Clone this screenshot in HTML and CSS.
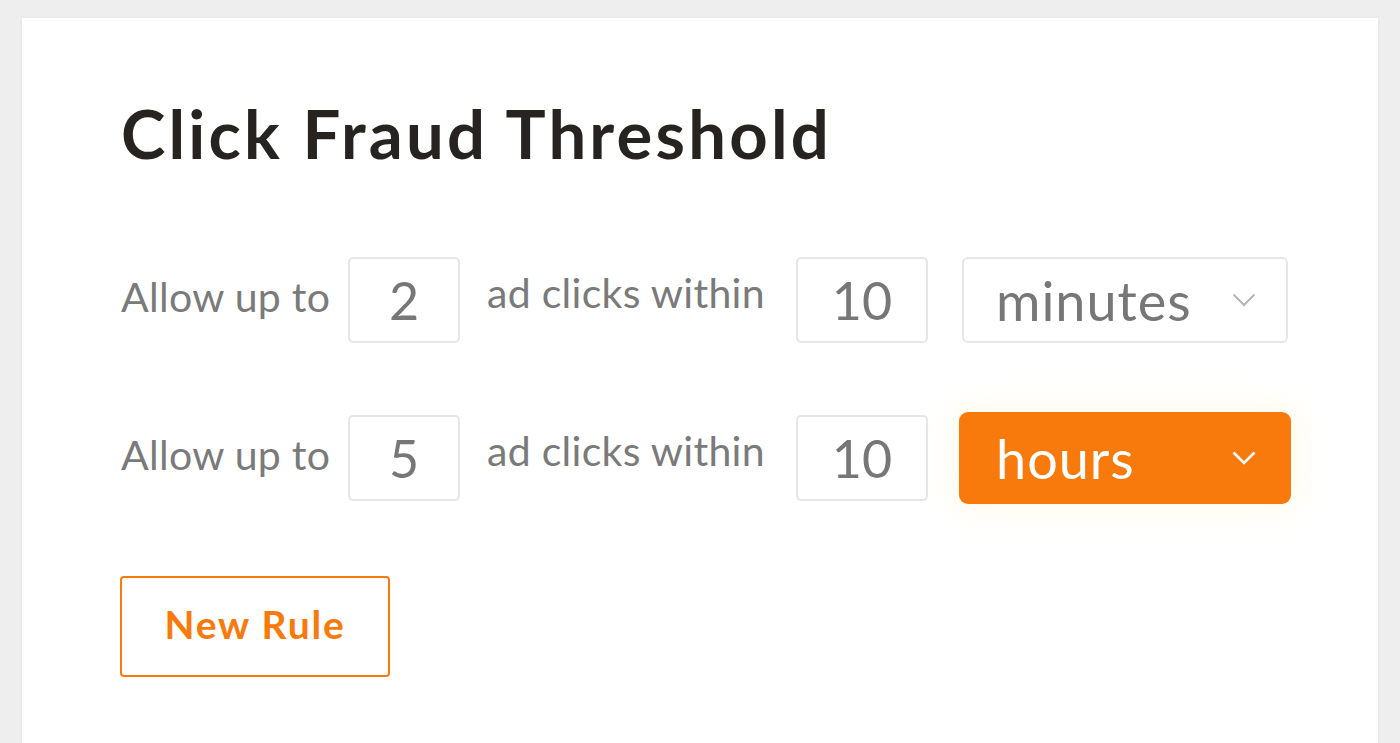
FILE: index.html
```html
<!DOCTYPE html>
<html>
<head>
<meta charset="utf-8">
<link rel="stylesheet" href="styles.css">
</head>
<body>
<div class="card">
  <h1 class="title">Click Fraud Threshold</h1>
  <div class="rule">
    <span class="label label-allow">Allow up to</span>
    <div class="num num-small">2</div>
    <span class="label label-within">ad clicks within</span>
    <div class="num num-wide">10</div>
    <div class="select">
      <span class="select-text">minutes</span>
      <svg class="chev" width="24" height="14" viewBox="0 0 24 14"><path d="M1.5 1.5 L12 12 L22.5 1.5" fill="none" stroke="#b5b5b5" stroke-width="2"/></svg>
    </div>
  </div>
  <div class="rule">
    <span class="label label-allow">Allow up to</span>
    <div class="num num-small">5</div>
    <span class="label label-within">ad clicks within</span>
    <div class="num num-wide">10</div>
    <div class="select select-active">
      <span class="select-text">hours</span>
      <svg class="chev" width="24" height="14" viewBox="0 0 24 14"><path d="M1.5 1.5 L12 12 L22.5 1.5" fill="none" stroke="#ffffff" stroke-width="2.6"/></svg>
    </div>
  </div>
  <button class="new-rule">New Rule</button>
</div>
</body>
</html>
```

FILE: styles.css
```css
html, body {
  margin: 0;
  padding: 0;
  height: 100%;
  background: #eeeeee;
  overflow: hidden;
}
body {
  font-family: "Lato", "Open Sans", sans-serif;
}
.card {
  margin: 18px 22px 0 22px;
  background: #ffffff;
  height: 800px;
  padding: 1px 40px 0 99px;
  box-shadow: 0 0 4px rgba(0,0,0,0.04);
}
.title {
  margin: 74px 0 0 0;
  font-size: 67px;
  line-height: 80px;
  font-weight: 700;
  color: #262320;
  letter-spacing: 3.2px;
}
.rule {
  display: flex;
  align-items: center;
  height: 86px;
  margin-top: 84px;
}
.rule + .rule {
  margin-top: 72px;
}
.rule > * {
  flex-shrink: 0;
}
.label {
  font-size: 41px;
  color: #7a7a7a;
  white-space: nowrap;
  letter-spacing: 0.3px;
  position: relative;
}
.label-allow {
  width: 227px;
  top: -4px;
}
.label-within {
  width: 336px;
  padding-left: 27px;
  box-sizing: border-box;
  top: -8px;
}
.num {
  height: 86px;
  box-sizing: border-box;
  border: 2px solid #e6e6e6;
  border-radius: 5px;
  display: flex;
  align-items: center;
  justify-content: center;
  font-size: 52px;
  color: #777777;
}
.num-small { width: 112px; }
.num-wide { width: 132px; }
.select {
  margin-left: 34px;
  width: 326px;
  height: 86px;
  box-sizing: border-box;
  border: 2px solid #e6e6e6;
  border-radius: 6px;
  display: flex;
  align-items: center;
  justify-content: space-between;
  padding: 0 30px 0 32px;
  font-size: 54px;
  letter-spacing: 1px;
  color: #777777;
}
.select-text {
  position: relative;
  top: 0px;
}
.select-active {
  background: #f97a0c;
  border-color: #f97a0c;
  color: #ffffff;
  box-shadow: 0 0 0 3px #f97a0c, 0 0 28px 8px rgba(255, 232, 150, 0.22);
  border-radius: 6px;
}
.chev {
  display: block;
}
.new-rule {
  display: block;
  margin-top: 75px;
  width: 270px;
  height: 101px;
  background: #ffffff;
  border: 2px solid #f97a0c;
  border-radius: 4px;
  color: #f97a0c;
  font-family: "Lato", "Open Sans", sans-serif;
  font-weight: 700;
  font-size: 39px;
  letter-spacing: 1.8px;
  padding: 0 0 6px 0;
  margin-left: -1px;
}
```
